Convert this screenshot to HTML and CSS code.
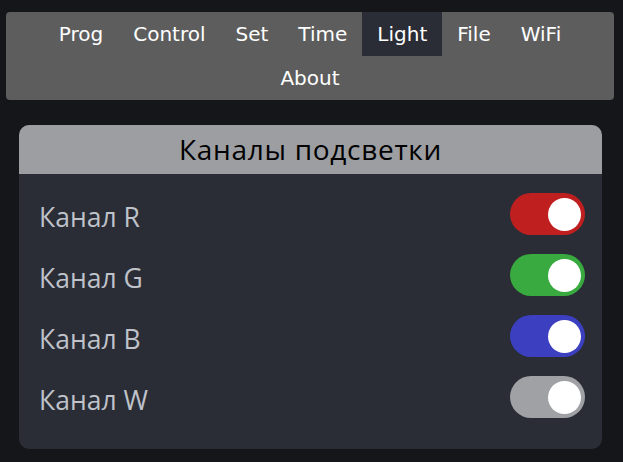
FILE: index.html
```html
<!DOCTYPE html>
<html lang="ru">
<head>
    <meta charset="UTF-8">
    <meta name="viewport" content="width=device-width, initial-scale=1.0">
    <title>Light</title>
    <link rel="stylesheet" href="styles.css">
</head>
<body>
    <nav class="menu">
        <a href="#" class="menu-item">Prog</a>
        <a href="#" class="menu-item">Control</a>
        <a href="#" class="menu-item">Set</a>
        <a href="#" class="menu-item">Time</a>
        <a href="#" class="menu-item active">Light</a>
        <a href="#" class="menu-item">File</a>
        <a href="#" class="menu-item">WiFi</a>
        <a href="#" class="menu-item">About</a>
    </nav>

    <div class="card">
        <div class="card-title">Каналы подсветки</div>
        <div class="card-body">
            <div class="row">
                <span class="label">Канал R</span>
                <label class="switch red"><input type="checkbox" checked><span class="knob"></span></label>
            </div>
            <div class="row">
                <span class="label">Канал G</span>
                <label class="switch green"><input type="checkbox" checked><span class="knob"></span></label>
            </div>
            <div class="row">
                <span class="label">Канал B</span>
                <label class="switch blue"><input type="checkbox" checked><span class="knob"></span></label>
            </div>
            <div class="row">
                <span class="label">Канал W</span>
                <label class="switch white"><input type="checkbox" checked><span class="knob"></span></label>
            </div>
        </div>
    </div>
</body>
</html>
```

FILE: styles.css
```css
body{
    margin:0;
    background-color:#14161a;
    font-family:"Open Sans", sans-serif;
}
nav.menu{
    margin:12px 9px 0 6px;
    background-color:#5d5d5d;
    border-radius:4px;
    display:flex;
    flex-wrap:wrap;
    justify-content:center;
}
a.menu-item{
    font-family:"DejaVu Sans", sans-serif;
    font-size:20px;
    line-height:44px;
    padding:0 15px;
    color:#fff;
    text-decoration:none;
}
a.menu-item.active{
    background-color:#2a2d35;
}
div.card{
    margin:25px 21px 0 19px;
    background-color:#2a2d36;
    border-radius:10px;
    overflow:hidden;
}
div.card-title{
    background-color:#9d9ea2;
    color:#000;
    text-align:center;
    font-size:28px;
    letter-spacing:0.7px;
    height:49px;
    line-height:49px;
}
div.card-body{
    padding:19px 17px 31px 20px;
    display:flex;
    flex-direction:column;
    gap:19px;
}
div.row{
    display:flex;
    justify-content:space-between;
    align-items:center;
    height:42px;
}
span.label{
    color:#bfc2c9;
    font-size:26.5px;
    padding-top:6px;
}
label.switch{
    position:relative;
    width:75px;
    height:42px;
    border-radius:21px;
}
label.switch input{
    display:none;
}
span.knob{
    position:absolute;
    top:5px;
    right:4px;
    width:33px;
    height:33px;
    border-radius:50%;
    background-color:#fff;
}
label.red{ background-color:#c01f20; }
label.green{ background-color:#39aa40; }
label.blue{ background-color:#3c3fc0; }
label.white{ background-color:#a0a1a5; }
```
